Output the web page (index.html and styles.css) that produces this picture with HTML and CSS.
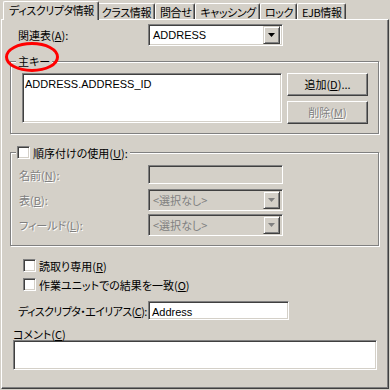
FILE: index.html
```html
<!DOCTYPE html>
<html>
<head>
<meta charset="UTF-8">
<title>ディスクリプタ情報</title>
<link rel="stylesheet" href="styles.css">
</head>
<body>

<div class="tabs">
  <div class="tab active">ディスクリプタ情報</div>
  <div class="tab">クラス情報</div>
  <div class="tab">問合せ</div>
  <div class="tab">キャッシング</div>
  <div class="tab">ロック</div>
  <div class="tab">EJB情報</div>
</div>

<div class="pane">

  <div class="form-row top-row">
    <span class="lbl">関連表(<u>A</u>):</span>
    <div class="combo">
      <span class="value">ADDRESS</span>
      <span class="drop"><svg width="7" height="4" viewBox="0 0 7 4"><path d="M0 0h7L3.5 4z" fill="#000"/></svg></span>
    </div>
  </div>

  <fieldset class="group pk">
    <legend>主キー</legend>
    <div class="pk-body">
      <div class="listbox"><span class="value">ADDRESS.ADDRESS_ID</span></div>
      <div class="btns">
        <div class="btn">追加(<u>D</u>)...</div>
        <div class="btn disabled">削除(<u>M</u>)</div>
      </div>
    </div>
  </fieldset>

  <fieldset class="group seq">
    <legend><span class="check"></span>順序付けの使用(<u>U</u>):</legend>
    <div class="seq-row first">
      <span class="lbl off">名前(<u>N</u>):</span>
      <div class="edit off"></div>
    </div>
    <div class="seq-row">
      <span class="lbl off">表(<u>B</u>):</span>
      <div class="combo off">
        <span class="value">&lt;選択なし&gt;</span>
        <span class="drop"><svg width="7" height="4" viewBox="0 0 7 4"><path d="M0 0h7L3.5 4z" fill="#808080"/></svg></span>
      </div>
    </div>
    <div class="seq-row tight">
      <span class="lbl off">フィールド(<u>L</u>):</span>
      <div class="combo off">
        <span class="value">&lt;選択なし&gt;</span>
        <span class="drop"><svg width="7" height="4" viewBox="0 0 7 4"><path d="M0 0h7L3.5 4z" fill="#808080"/></svg></span>
      </div>
    </div>
  </fieldset>

  <div class="checks">
    <div class="check-row"><span class="check"></span>読取り専用(<u>R</u>)</div>
    <div class="check-row"><span class="check"></span>作業ユニットでの結果を一致(<u>O</u>)</div>
  </div>

  <div class="form-row alias-row">
    <span class="lbl narrow">ディスクリプタ・エイリアス(<u>C</u>):</span>
    <div class="edit"><span class="value">Address</span></div>
  </div>

  <div class="comment-lbl">コメント(<u>C</u>)</div>
  <div class="memo"></div>

</div>

<!-- red mark drawn over the group label -->
<svg class="mark" width="70" height="80" viewBox="0 0 70 80">
  <ellipse cx="32" cy="57" rx="25.5" ry="13.5" fill="none" stroke="#ff0000" stroke-width="3"/>
</svg>

</body>
</html>
```

FILE: styles.css
```css
html, body {
  margin: 0;
  padding: 0;
  background: #d4d0c8;
}

body {
  position: relative;
  width: 390px;
  height: 390px;
  overflow: hidden;
  color: #000;
  font-family: "Noto Sans CJK JP", sans-serif;
  font-size: 11px;
  font-feature-settings: "palt";
  line-height: 12px;
}

u {
  text-decoration: underline;
  text-underline-offset: 1px;
}

.value {
  font-family: "Liberation Sans", "Noto Sans CJK JP", sans-serif;
  font-size: 11px;
}

/* tabs */
.tabs {
  display: flex;
  align-items: flex-end;
  height: 19px;
  padding-left: 5px;
}

.tab {
  position: relative;
  box-sizing: border-box;
  height: 16px;
  padding: 2px 3px 0 4px;
  border-top: 1px solid #fff;
  border-left: 1px solid #fff;
  border-right: 1px solid #404040;
  border-radius: 2px 2px 0 0;
  box-shadow: inset -1px 0 #808080;
  white-space: nowrap;
  letter-spacing: -0.4px;
}

.tab.active {
  z-index: 2;
  height: 19px;
  margin: 0 -2px -1px -2px;
  padding: 2px 4px 0 5px;
  background: #d4d0c8;
}

/* tab page */
.pane {
  position: relative;
  z-index: 1;
  box-sizing: border-box;
  width: 388px;
  height: 370px;
  margin-left: 1px;
  padding: 4px 9px 0 8px;
  border: 1px solid;
  border-color: #fff #404040 #404040 #fff;
  box-shadow: inset -1px -1px #808080;
}

.form-row {
  display: grid;
  grid-template-columns: 138px auto;
  align-items: center;
}

.lbl {
  padding-left: 8px;
  white-space: nowrap;
}

.lbl.narrow {
  letter-spacing: -0.6px;
}

.lbl.off {
  color: #808080;
  text-shadow: 1px 1px #fff;
}

/* sunken fields */
.combo, .edit, .listbox, .memo, .check {
  box-sizing: border-box;
  background: #fff;
  border: 1px solid;
  border-color: #808080 #fff #fff #808080;
  box-shadow: inset 1px 1px #404040, inset -1px -1px #d4d0c8;
}

.combo {
  display: flex;
  align-items: center;
  width: 135px;
  height: 22px;
  padding: 2px;
}

.combo .value {
  flex: 1;
  padding-left: 2px;
}

.combo.off {
  background: #d4d0c8;
}

.combo.off .value {
  color: #808080;
  font-family: "Noto Sans CJK JP", sans-serif;
}

.drop {
  display: flex;
  align-items: center;
  justify-content: center;
  box-sizing: border-box;
  width: 17px;
  height: 18px;
  border: 1px solid;
  border-color: #d4d0c8 #404040 #404040 #d4d0c8;
  box-shadow: inset 1px 1px #fff, inset -1px -1px #808080;
  background: #d4d0c8;
}

.edit {
  width: 135px;
  height: 19px;
  padding: 3px 3px 0 3px;
}

.edit.off {
  background: #d4d0c8;
}

/* group boxes */
.group {
  box-sizing: border-box;
  width: 369px;
  margin: 0;
  padding: 0;
  border: 1px solid #808080;
  box-shadow: inset 1px 1px #fff, 1px 1px #fff;
  min-inline-size: 0;
}

.group legend {
  display: flex;
  align-items: center;
  margin-left: 5px;
  padding: 0 2px;
  background: #d4d0c8;
  line-height: 12px;
}

.pk {
  margin-top: 9px;
}

.pk-body {
  display: flex;
  gap: 5px;
  padding: 6px 9px 9px 11px;
}

.listbox {
  width: 260px;
  height: 50px;
  padding: 3px 2px;
}

.btns {
  display: flex;
  flex-direction: column;
  gap: 5px;
}

.btn {
  box-sizing: border-box;
  width: 81px;
  height: 23px;
  padding-top: 4px;
  text-align: center;
  border: 1px solid;
  border-color: #fff #404040 #404040 #fff;
  box-shadow: inset -1px -1px #808080;
}

.btn.disabled {
  color: #808080;
  text-shadow: 1px 1px #fff;
}

.seq {
  margin-top: 12px;
  padding: 6px 0 9px 0;
}

.seq legend {
  margin-left: 5px;
  padding-left: 1px;
}

.check {
  display: inline-block;
  width: 13px;
  height: 13px;
  margin-right: 3px;
}

.seq-row {
  display: grid;
  grid-template-columns: 137px auto;
  align-items: center;
  margin-top: 5px;
}

.seq-row.first {
  margin-top: 0;
}

.seq-row.tight {
  margin-top: 3px;
}

.checks {
  margin-top: 10px;
  padding-left: 13px;
}

.check-row {
  display: flex;
  align-items: center;
  height: 19px;
}

.alias-row {
  margin-top: 7px;
}

.alias-row .edit {
  width: 141px;
}

.comment-lbl {
  margin-top: 8px;
  padding-left: 3px;
  height: 12px;
}

.memo {
  width: 364px;
  height: 30px;
  margin-left: 3px;
}

.mark {
  position: absolute;
  left: 0;
  top: 0;
  z-index: 5;
}
```
